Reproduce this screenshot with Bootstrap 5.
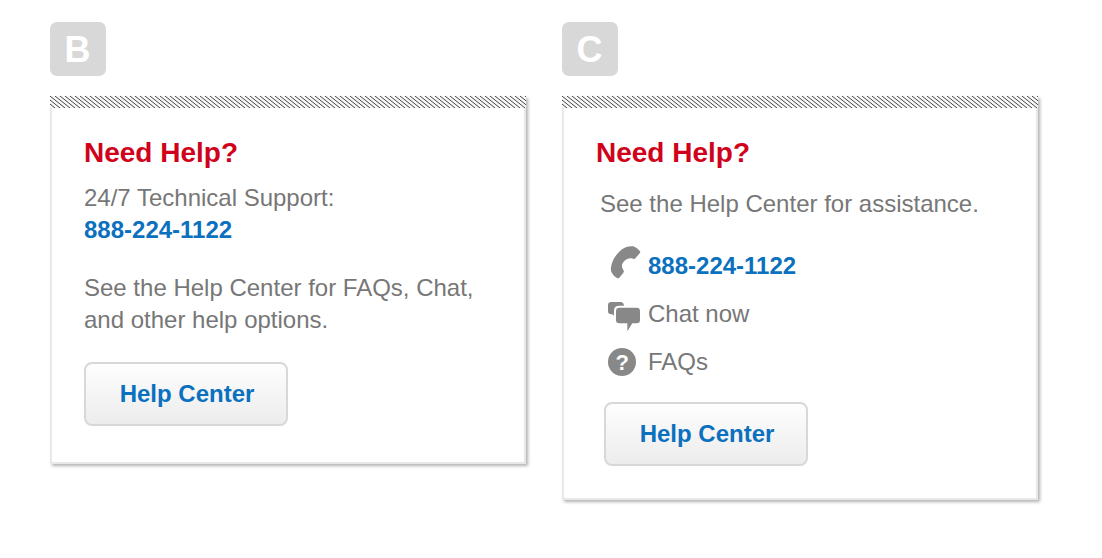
<!DOCTYPE html>
<html lang="en">
<head>
    <meta charset="UTF-8">
    <meta name="viewport" content="width=device-width, initial-scale=1.0">
    <title>Need Help?</title>
    <link href="https://cdn.jsdelivr.net/npm/bootstrap@5.3.0/dist/css/bootstrap.min.css" rel="stylesheet">
    <style>
        body {
            font-family: "Liberation Sans", Arial, sans-serif;
            font-size: 24px;
            line-height: 32px;
            color: #777;
            background: #fff;
        }
        .options {
            padding: 22px 0 0 50px;
            gap: 36px;
        }
        .option {
            width: 476px;
        }
        .option-tag {
            width: 56px;
            height: 54px;
            margin-bottom: 20px;
            padding: 2px 1px 0 0;
            border-radius: 7px;
            background: #d8d8d8;
            font-size: 36px;
        }
        .help-card {
            border: 2px solid #e8e8e8;
            border-top: 0;
            border-radius: 0;
            box-shadow: 2px 2px 3px rgba(0, 0, 0, .3);
        }
        .help-stripe {
            width: 476px;
            height: 12px;
            margin: 0 -2px;
        }
        .help-card .card-body {
            padding: 29px 32px 36px;
        }
        .help-card .card-body-links {
            padding-right: 0;
            padding-bottom: 32px;
        }
        .help-title {
            margin: 0 0 13px;
            font-size: 28px;
            line-height: 32px;
            color: #d0021b;
        }
        .help-intro {
            padding: 6px 0 0 4px;
        }
        .help-phone {
            color: #0b70be;
        }
        .help-text {
            margin: 26px 0;
        }
        .btn-help {
            width: 204px;
            height: 64px;
            padding: 0 0 0 2px;
            border: 2px solid #d8d8d8;
            border-radius: 8px;
            background: linear-gradient(#fefefe, #ececec);
            color: #0b70be;
            font-size: 24px;
            line-height: 60px;
        }
        .help-links {
            margin: 30px 0 24px 12px;
            gap: 16px;
        }
        .help-links svg {
            width: 32px;
            height: 36px;
            margin: -2px 8px -2px 0;
            overflow: visible;
            fill: #888;
        }
        .help-links text {
            fill: #fff;
        }
    </style>
</head>
<body>
    <div class="options d-flex align-items-start min-vh-100">
        <section class="option">
            <div class="option-tag d-flex align-items-center justify-content-center text-white fw-bold">B</div>
            <div class="card help-card">
                <svg class="help-stripe" aria-hidden="true">
                    <defs>
                        <pattern id="hatch" width="15" height="12" patternUnits="userSpaceOnUse">
                            <path d="M-15 0 0 12M-10 0 5 12M-5 0 10 12M0 0 15 12M5 0 20 12M10 0 25 12" stroke="#444" stroke-width="1" stroke-linecap="square"/>
                        </pattern>
                    </defs>
                    <rect width="476" height="12" fill="#f8f8f8"/>
                    <rect width="476" height="12" fill="url(#hatch)"/>
                </svg>
                <div class="card-body">
                    <h2 class="help-title fw-bold">Need Help?</h2>
                    <div>24/7 Technical Support:</div>
                    <div class="help-phone fw-bold">888-224-1122</div>
                    <p class="help-text">See the Help Center for FAQs, Chat,<br>and other help options.</p>
                    <button type="button" class="btn btn-help fw-bold">Help Center</button>
                </div>
            </div>
        </section>

        <section class="option">
            <div class="option-tag d-flex align-items-center justify-content-center text-white fw-bold">C</div>
            <div class="card help-card">
                <svg class="help-stripe" aria-hidden="true">
                    <rect width="476" height="12" fill="#f8f8f8"/>
                    <rect width="476" height="12" fill="url(#hatch)"/>
                </svg>
                <div class="card-body card-body-links">
                    <h2 class="help-title fw-bold">Need Help?</h2>
                    <div class="help-intro">See the Help Center for assistance.</div>
                    <div class="help-links d-flex flex-column">
                        <div class="d-flex">
                            <!-- handset -->
                            <svg viewBox="0 0 96 108">
                                <path d="M40 5C52 -4 66 -7 76 -5Q88 -1 96 10Q98 13 95 16L82 31Q79 34 75 32C64 29 54 33 47 41C40 49 40 58 46 66Q49 70 46 74L34 89Q31 92 27 90Q16 84 10 72Q8 66 9 58C12 38 24 18 40 5Z"/>
                            </svg>
                            <span class="help-phone fw-bold">888-224-1122</span>
                        </div>
                        <div class="d-flex">
                            <!-- speech bubbles -->
                            <svg viewBox="0 0 96 108">
                                <path d="M10 18H38Q47 18 48 29H34Q18 29 18 44V59L13 55H10Q0 55 0 46V27Q0 18 10 18Z"/>
                                <path d="M34 35H86Q96 35 96 45V72Q96 82 86 82H73L58 106V82H34Q24 82 24 72V45Q24 35 34 35Z"/>
                            </svg>
                            <span>Chat now</span>
                        </div>
                        <div class="d-flex">
                            <!-- question mark -->
                            <svg viewBox="0 0 96 108">
                                <circle cx="42" cy="54" r="42"/>
                                <text x="43" y="78" text-anchor="middle" font-size="66" font-weight="bold">?</text>
                            </svg>
                            <span>FAQs</span>
                        </div>
                    </div>
                    <button type="button" class="btn btn-help fw-bold ms-2">Help Center</button>
                </div>
            </div>
        </section>
    </div>
    <script src="https://cdn.jsdelivr.net/npm/bootstrap@5.3.0/dist/js/bootstrap.bundle.min.js"></script>
</body>
</html>
